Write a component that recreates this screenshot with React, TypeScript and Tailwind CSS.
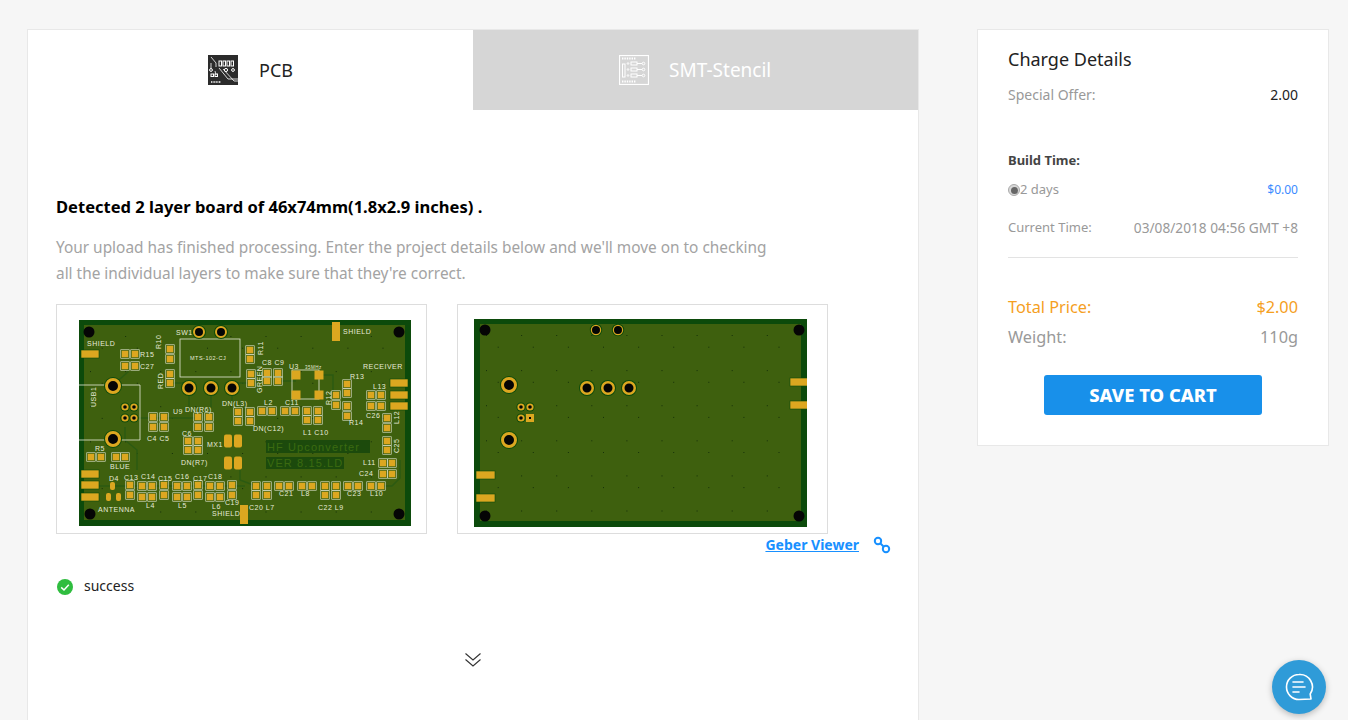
import React from "react";

const PAD = "#dca720";
const BOARD = "#3e600e";
const EDGE = "#0c4a0b";
const TRACE = "#2c5a12";
const SILK = "#e6ead8";

type Pt = [number, number];

function Dots({ x0, x1, y0, y1 }: { x0: number; x1: number; y0: number; y1: number }) {
    const dots: Pt[] = [];
    for (let i = 0; x0 + i * 11.7 < x1; i++) {
        for (let j = 0; y0 + j * 11.7 < y1; j++) {
            if ((i * 7 + j * 13 + (i * j) % 3) % 3 === 0) dots.push([x0 + i * 11.7, y0 + j * 11.7]);
        }
    }
    return (
        <g fill="#16300a">
            {dots.map(([x, y]) => (
                <rect key={`${x}-${y}`} x={x} y={y} width="1" height="1" />
            ))}
        </g>
    );
}

function Hole({ x, y, r = 5.5 }: { x: number; y: number; r?: number }) {
    return <circle cx={x} cy={y} r={r} fill="#050505" />;
}

function Via({ x, y, r, ring }: { x: number; y: number; r: number; ring: number }) {
    return (
        <g>
            <circle cx={x} cy={y} r={r + ring + 1} fill={EDGE} />
            <circle cx={x} cy={y} r={r + ring / 2} fill="#050505" stroke={PAD} strokeWidth={ring} />
        </g>
    );
}

// small smd pad with its silkscreen frame
function Pad({ x, y, w = 6.5, h = 6.5 }: { x: number; y: number; w?: number; h?: number }) {
    return (
        <g>
            <rect x={x - w / 2 - 1} y={y - h / 2 - 1} width={w + 2} height={h + 2} fill="none" stroke={SILK} strokeWidth="0.6" />
            <rect x={x - w / 2} y={y - h / 2} width={w} height={h} fill={PAD} />
        </g>
    );
}

function Bar({ x, y, w = 18, h = 8 }: { x: number; y: number; w?: number; h?: number }) {
    return <rect x={x} y={y - h / 2} width={w} height={h} fill={PAD} stroke={EDGE} strokeWidth="0.6" />;
}

function Label({ x, y, t, rotate, size = 7 }: { x: number; y: number; t: string; rotate?: boolean; size?: number }) {
    return (
        <text
            x={x}
            y={y}
            fontSize={size}
            fill={SILK}
            letterSpacing="0.5"
            fontFamily="Liberation Sans, sans-serif"
            transform={rotate ? `rotate(-90 ${x} ${y})` : undefined}
        >
            {t}
        </text>
    );
}

const topPads: Pt[] = [
    [125, 354], [135, 354], [125, 366], [135, 366], [170, 349], [170, 359], [170, 374], [170, 383],
    [250, 350], [250, 359], [251, 374], [251, 383], [267, 373], [267, 381], [278, 373], [278, 381],
    [347, 384], [347, 393], [336, 395], [336, 405], [347, 406], [347, 416], [371, 395], [381, 395],
    [371, 406], [381, 406], [387, 418], [387, 428], [387, 441], [387, 450], [383, 463], [392, 463],
    [383, 474], [392, 474], [256, 486], [267, 486], [279, 486], [289, 486], [302, 486], [312, 486],
    [325, 486], [336, 486], [348, 486], [358, 486], [371, 486], [381, 486], [256, 495], [267, 495],
    [325, 495], [336, 495], [91, 457], [101, 457], [116, 457], [125, 457], [130, 485], [130, 495],
    [142, 486], [152, 486], [142, 497], [152, 497], [164, 485], [164, 495], [177, 486], [187, 486],
    [177, 497], [187, 497], [198, 485], [198, 495], [210, 486], [220, 486], [210, 497], [220, 497],
    [232, 485], [232, 495], [153, 417], [164, 417], [153, 427], [164, 427], [198, 417], [209, 417],
    [198, 427], [209, 427], [188, 441], [198, 441], [188, 450], [198, 450], [250, 412], [250, 421],
    [262, 411], [272, 411], [285, 411], [295, 411], [307, 411], [318, 411], [307, 420], [318, 420],
    [238, 412], [238, 421],
];

const topLabels: [number, number, string][] = [
    [87, 346, "SHIELD"], [140, 357, "R15"], [140, 369, "C27"], [176, 335, "SW1"], [343, 334, "SHIELD"],
    [363, 369, "RECEIVER"], [262, 365, "C8 C9"], [289, 369, "U3"], [350, 379, "R13"], [373, 389, "L13"],
    [366, 418, "C26"], [349, 425, "R14"], [222, 406, "DN(L3)"], [264, 405, "L2"], [285, 405, "C11"],
    [185, 412, "DN(R6)"], [173, 414, "U9"], [147, 441, "C4 C5"], [182, 436, "C6"], [181, 465, "DN(R7)"],
    [207, 447, "MX1"], [253, 431, "DN(C12)"], [303, 435, "L1 C10"], [95, 451, "R5"], [110, 469, "BLUE"],
    [109, 481, "D4"], [124, 480, "C13"], [141, 479, "C14"], [158, 481, "C15"], [175, 479, "C16"],
    [193, 481, "C17"], [208, 479, "C18"], [146, 508, "L4"], [178, 508, "L5"], [212, 509, "L6"],
    [225, 505, "C19"], [98, 512, "ANTENNA"], [212, 516, "SHIELD"], [279, 496, "C21"], [301, 496, "L8"],
    [347, 496, "C23"], [370, 496, "L10"], [249, 510, "C20 L7"], [318, 510, "C22 L9"], [363, 465, "L11"],
    [359, 476, "C24"],
];

function PcbTop() {
    return (
        <svg viewBox="79 320 332 206" className="w-[332px] h-[206px] block">
            <rect x="79" y="320" width="332" height="206" fill={EDGE} />
            <rect x="84" y="325" width="321" height="195" fill={BOARD} />
            <Dots x0={90} x1={400} y0={336} y1={516} />
            <g fill="none" stroke={TRACE} strokeWidth="1.5">
                <path d="M113 385 L128 372 V366" />
                <path d="M170 383 H189 M211 388 V412 M232 388 V405 M189 388 V412" />
                <path d="M134 418 H198 M125 427 V440 L137 450 V470" />
                <path d="M251 383 H238 L232 388 M278 381 H296 M319 375 H333 V395" />
                <path d="M240 468 V480 L256 486 M381 486 H392 L400 478 V460" />
                <path d="M81 486 H245" />
            </g>
            <path d="M79 385 H140 V440 H79" fill="none" stroke={SILK} strokeWidth="0.8" />
            <rect x="180" y="339" width="60" height="38" fill="none" stroke={SILK} strokeWidth="0.8" />
            <rect x="292" y="370" width="27" height="29" fill="none" stroke={SILK} strokeWidth="0.8" />
            <rect x="266" y="440" width="104" height="13" fill="#1c4a0c" />
            <rect x="266" y="457" width="78" height="12" fill="#1c4a0c" />
            <text x="267" y="451" fontSize="11" fill="#3b6a10" letterSpacing="1.1" fontFamily="Liberation Sans, sans-serif">HF Upconverter</text>
            <text x="267" y="467" fontSize="11" fill="#3b6a10" letterSpacing="1.1" fontFamily="Liberation Sans, sans-serif">VER 8.15.LD</text>

            {topPads.map(([x, y]) => (
                <Pad key={`${x}-${y}`} x={x} y={y} />
            ))}
            {[[296, 375], [319, 375], [296, 395], [319, 395]].map(([x, y]) => (
                <rect key={`u-${x}-${y}`} x={x - 4.5} y={y - 4.5} width="9" height="9" fill={PAD} />
            ))}
            {[[228, 441], [238, 441], [228, 463], [238, 463]].map(([x, y]) => (
                <rect key={`m-${x}-${y}`} x={x - 4} y={y - 6.5} width="8" height="13" rx="2" fill={PAD} />
            ))}
            <Bar x={81} y={354} />
            <Bar x={390} y={383} />
            <Bar x={390} y={395} />
            <Bar x={390} y={406} />
            <Bar x={81} y={474} />
            <Bar x={81} y={485} />
            <Bar x={81} y={497} />
            <rect x="332" y="322" width="8" height="19" fill={PAD} />
            <rect x="240" y="505" width="8" height="19" fill={PAD} />
            <rect x="110" y="482" width="5" height="8" rx="2" fill={PAD} />
            <rect x="106" y="493" width="5" height="8" rx="2" fill={PAD} />
            <rect x="116" y="493" width="5" height="8" rx="2" fill={PAD} />

            <Hole x={89} y={332} />
            <Hole x={399} y={332} />
            <Hole x={90} y={514} />
            <Hole x={399} y={514} />
            <Via x={199} y={332} r={4} ring={2} />
            <Via x={221} y={332} r={4} ring={2} />
            <Via x={113} y={386} r={5} ring={3} />
            <Via x={113} y={439} r={5} ring={3} />
            <Via x={189} y={388} r={4.5} ring={2.5} />
            <Via x={211} y={388} r={4.5} ring={2.5} />
            <Via x={232} y={388} r={4.5} ring={2.5} />
            <Via x={125} y={407} r={1.8} ring={1.8} />
            <Via x={134} y={407} r={1.8} ring={1.8} />
            <Via x={125} y={418} r={1.8} ring={1.8} />
            <Via x={134} y={418} r={1.8} ring={1.8} />

            {topLabels.map(([x, y, t]) => (
                <Label key={`${t}-${x}`} x={x} y={y} t={t} />
            ))}
            <Label x={190} y={360} t="MTS-102-CJ" size={5.5} />
            <Label x={305} y={369} t="35MHz" size={4.5} />
            <Label x={161} y={349} t="R10" rotate />
            <Label x={163} y={389} t="RED" rotate />
            <Label x={96} y={407} t="USB1" rotate />
            <Label x={263} y={355} t="R11" rotate />
            <Label x={262} y={393} t="GREEN" rotate />
            <Label x={331} y={405} t="R12" rotate />
            <Label x={399} y={424} t="L12" rotate />
            <Label x={399} y={453} t="C25" rotate />
        </svg>
    );
}

function PcbBottom() {
    return (
        <svg viewBox="474 319 333 208" className="w-[333px] h-[208px] block">
            <rect x="474" y="319" width="333" height="208" fill={EDGE} />
            <rect x="480" y="324" width="321" height="197" fill={BOARD} />
            <Dots x0={486} x1={800} y0={335} y1={516} />
            <Hole x={485} y={330} />
            <Hole x={799} y={330} />
            <Hole x={485} y={516} />
            <Hole x={799} y={516} />
            <Via x={596} y={330} r={4} ring={1.2} />
            <Via x={618} y={330} r={4} ring={1.2} />
            <Via x={509} y={385} r={5} ring={3} />
            <Via x={509} y={440} r={5} ring={3} />
            <Via x={587} y={388} r={4.5} ring={2.5} />
            <Via x={608} y={388} r={4.5} ring={2.5} />
            <Via x={629} y={388} r={4.5} ring={2.5} />
            <Via x={521} y={407} r={1.8} ring={1.8} />
            <Via x={530} y={407} r={1.8} ring={1.8} />
            <Via x={521} y={418} r={1.8} ring={1.8} />
            <rect x="526" y="414" width="8" height="8" fill={PAD} />
            <rect x="529" y="417" width="2" height="2" fill="#050505" />
            <Bar x={790} y={382} w={19} />
            <Bar x={790} y={405} w={19} />
            <Bar x={476} y={475} w={19} />
            <Bar x={476} y={498} w={19} />
        </svg>
    );
}

function PcbIcon() {
    return (
        <svg viewBox="0 0 30 30" className="w-[30px] h-[30px]" fill="none" stroke="#fff" strokeWidth="1">
            <rect width="30" height="30" fill="#2b2b2b" stroke="none" />
            <path d="M3 2 L8 8 V12 M3 8 V14 M11 13 L20 24 H30 M15 14 L26 26 H30 M7 16 L8 20" strokeWidth="0.8" />
            <rect x="11" y="6" width="2.5" height="5" />
            <rect x="15" y="6" width="2.5" height="5" />
            <rect x="19" y="6" width="2.5" height="5" />
            <rect x="23" y="6" width="2.5" height="5" />
            <circle cx="3" cy="15" r="1.4" />
            <circle cx="18" cy="15" r="1.6" />
            <circle cx="25" cy="15" r="1.4" />
            <rect x="3" y="19" width="2.5" height="2.5" />
            <rect x="7" y="19" width="2.5" height="2.5" />
            <path d="M3 27 H13" strokeWidth="1.5" strokeDasharray="1 0.6" />
        </svg>
    );
}

function StencilIcon() {
    return (
        <svg viewBox="0 0 30 30" className="w-[30px] h-[30px]" fill="none" stroke="#fff" strokeWidth="1">
            <rect x="0.5" y="0.5" width="29" height="29" strokeWidth="1.2" />
            <path d="M3 3.5 H17 M3 26.5 H17" strokeWidth="2" strokeDasharray="1.4 1" />
            <rect x="3.5" y="9" width="2.5" height="13" />
            <rect x="12" y="7" width="6" height="3" />
            <rect x="12" y="13" width="6" height="3" />
            <rect x="12" y="19" width="6" height="3" />
            <path d="M18 8.5 H23 M18 14.5 H23 M18 20.5 H23" />
            <circle cx="24.5" cy="8.5" r="1.3" />
            <circle cx="24.5" cy="14.5" r="1.3" />
            <circle cx="24.5" cy="20.5" r="1.3" />
            <circle cx="9" cy="8.5" r="0.8" />
            <circle cx="9" cy="14.5" r="0.8" />
            <circle cx="9" cy="20.5" r="0.8" />
        </svg>
    );
}

export default function App() {
    return (
        <div className="relative h-[720px] overflow-hidden bg-[#f6f6f6] font-['Noto_Sans',sans-serif]">
            <div className="flex items-start pt-[29px] pl-[27px]">
                {/* Main card */}
                <div className="w-[892px] h-[700px] bg-white border border-[#e8e8e8]">
                    {/* Tabs */}
                    <div className="flex h-20">
                        <div className="w-[445px] flex items-center pl-[180px] gap-[21px] text-[18px] text-[#222]">
                            <PcbIcon />
                            <span>PCB</span>
                        </div>
                        <div className="flex-1 bg-[#d6d6d6] flex items-center pl-[146px] gap-[20px] text-[19px] text-white">
                            <StencilIcon />
                            <span>SMT-Stencil</span>
                        </div>
                    </div>

                    <div className="pl-[28px] pt-[85px]">
                        <h2 className="text-[16.55px] leading-6 font-bold text-black">
                            Detected 2 layer board of 46x74mm(1.8x2.9 inches) .
                        </h2>
                        <p className="mt-[16px] text-[15.4px] leading-[26px] text-[#a3a3a3]">
                            Your upload has finished processing. Enter the project details below and we'll move on to checking
                            <br />
                            all the individual layers to make sure that they're correct.
                        </p>

                        {/* Board previews */}
                        <div className="flex gap-[30px] mt-[17px]">
                            <div className="w-[371px] h-[230px] border border-[#dddddd] pl-[22px] pt-[15px]">
                                <PcbTop />
                            </div>
                            <div className="w-[371px] h-[230px] border border-[#dddddd] pl-[16px] pt-[14px]">
                                <PcbBottom />
                            </div>
                        </div>

                        <div className="flex justify-end items-center pr-[27px] mt-[-1px] h-[22px]">
                            <a className="text-[14px] font-bold text-[#1890ff] underline">Geber Viewer</a>
                            <svg viewBox="0 0 18 18" className="w-[18px] h-[18px] ml-[14px] mt-[2px]" fill="none" stroke="#1890ff" strokeWidth="2">
                                <circle cx="5" cy="5" r="3.2" />
                                <circle cx="13" cy="13" r="3.2" />
                                <path d="M7 7 L11 11" />
                            </svg>
                        </div>

                        <div className="flex items-center mt-[20px] text-[14px] text-[#222] h-5">
                            <svg viewBox="0 0 16 16" className="w-4 h-4 mt-[3px] ml-[1px]">
                                <circle cx="8" cy="8" r="8" fill="#2fbd3f" />
                                <path d="M4.2 8.4 L7 11 L11.8 5.8" fill="none" stroke="#fff" strokeWidth="1.5" />
                            </svg>
                            <span className="ml-[11px]">success</span>
                        </div>

                        {/* Expand chevrons */}
                        <div className="flex justify-center mt-[57px] pr-[28px]">
                            <svg viewBox="0 0 18 16" className="w-[18px] h-4" fill="none" stroke="#333" strokeWidth="1.1">
                                <path d="M1.5 1.5 L9 8 L16.5 1.5" />
                                <path d="M1.5 7.5 L9 14 L16.5 7.5" />
                            </svg>
                        </div>
                    </div>
                </div>

                {/* Charge details */}
                <div className="ml-[58px] w-[352px] h-[417px] bg-white border border-[#e8e8e8] pl-[30px] pr-[30px] pt-[15px]">
                    <h3 className="text-[18px] leading-[28px] text-[#222]">Charge Details</h3>
                    <div className="flex justify-between items-center mt-[9px] h-6 text-[14px]">
                        <span className="text-[#999]">Special Offer:</span>
                        <span className="text-[#222]">2.00</span>
                    </div>
                    <div className="mt-[44px] h-5 text-[13px] font-bold text-[#444] leading-5">Build Time:</div>
                    <div className="flex justify-between items-center mt-[10px] h-5 text-[13px]">
                        <span className="flex items-center text-[#999]">
                            <span className="w-3 h-3 rounded-full bg-[#d8d8d8] border border-[#aaa] flex items-center justify-center">
                                <span className="w-[7px] h-[7px] rounded-full bg-[#666]" />
                            </span>
                            2 days
                        </span>
                        <span className="text-[12px] text-[#3b8bff]">$0.00</span>
                    </div>
                    <div className="flex justify-between items-center mt-[18px] h-5 text-[13px] text-[#999]">
                        <span>Current Time:</span>
                        <span className="text-[13.7px]">03/08/2018 04:56 GMT +8</span>
                    </div>
                    <div className="mt-[19px] border-t border-[#e3e3e3]" />
                    <div className="flex justify-between items-center mt-[37px] h-6 text-[16.3px] text-[#f5a01f]">
                        <span>Total Price:</span>
                        <span>$2.00</span>
                    </div>
                    <div className="flex justify-between items-center mt-[6px] h-6 text-[16.3px] text-[#999]">
                        <span>Weight:</span>
                        <span>110g</span>
                    </div>
                    <div className="flex justify-center mt-[26px]">
                        <button className="w-[218px] h-10 rounded-[3px] bg-[#1890ea] text-white text-[18.4px] font-extrabold">
                            SAVE TO CART
                        </button>
                    </div>
                </div>
            </div>

            {/* Chat bubble */}
            <div className="absolute left-[1272px] top-[660px] w-[54px] h-[54px] rounded-full bg-[#2f9bd8] shadow-[0_2px_6px_rgba(0,0,0,0.25)] flex items-center justify-center">
                <svg viewBox="0 0 30 30" className="w-[30px] h-[30px]" fill="none" stroke="#fff" strokeWidth="1.6">
                    <path d="M15 2.5 A12.5 12.5 0 1 0 15 27.5 L27 27 L26.2 22 A12.5 12.5 0 0 0 15 2.5 Z" strokeLinejoin="round" />
                    <path d="M9 10 H19 M9 15 H21 M9 20 H15" strokeLinecap="round" />
                </svg>
            </div>
        </div>
    );
}
